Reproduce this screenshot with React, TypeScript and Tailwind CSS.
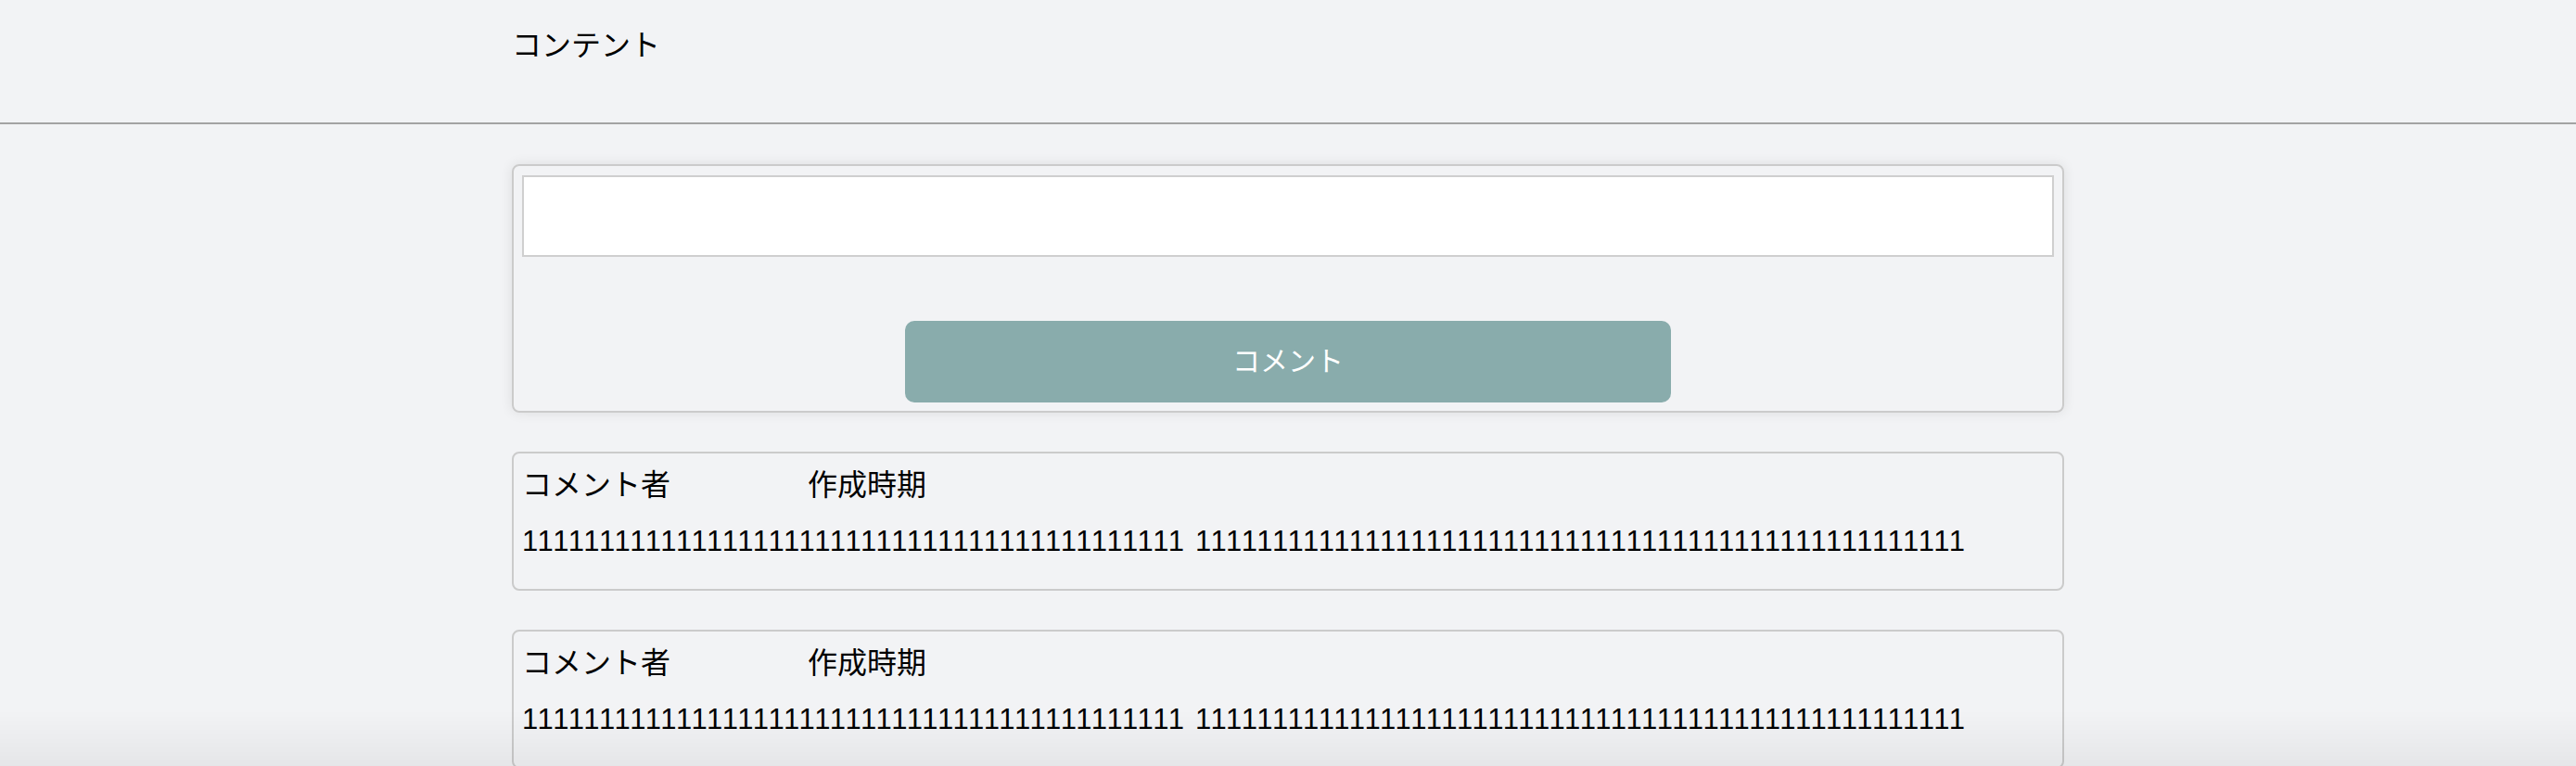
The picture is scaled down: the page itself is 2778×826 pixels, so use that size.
import React from 'react';

interface Comment {
  author: string;
  createdAt: string;
  body: string;
}

const body = '1'.repeat(43) + ' ' + '1'.repeat(50);

const comments: Comment[] = [
  { author: 'コメント者', createdAt: '作成時期', body },
  { author: 'コメント者', createdAt: '作成時期', body }
];

const CommentCard: React.FC<{ comment: Comment }> = ({ comment }) => (
  <div className="rounded-lg border-2 border-[#cbcbcb] px-[9px] pt-[9px] pb-[29px] text-black">
    <div className="flex [font-family:'Noto_Sans_CJK_JP',sans-serif] text-[32px] leading-[45px]">
      <span className="w-[308px] shrink-0">{comment.author}</span>
      <span>{comment.createdAt}</span>
    </div>
    <p className="mt-[18px] whitespace-nowrap [font-family:'Liberation_Sans',Arial,sans-serif] text-[31px] leading-[45px] tracking-[1.65px]">
      {comment.body}
    </p>
  </div>
);

export default function App() {
  return (
    <div className="min-h-screen bg-[#f2f3f5]">
      <header className="h-[134px] border-b-2 border-[#a3a3a3]">
        <div className="mx-auto w-[1674px] pt-6 [font-family:'Noto_Sans_CJK_JP',sans-serif] text-[32px] leading-[45px] text-black">
          コンテント
        </div>
      </header>

      <main className="mx-auto flex w-[1674px] flex-col gap-[42px] pt-[43px]">
        <form className="flex flex-col rounded-lg border-2 border-[#cbcbcb] px-[9px] pt-[10px] pb-[9px] shadow-[0_0_14px_rgba(0,0,0,0.09)]">
          <input type="text" className="h-[88px] w-full border-2 border-[#cfcfcf] bg-white px-3 text-[30px] outline-none" />
          <button
            type="button"
            className="mx-auto mt-[69px] h-[88px] w-1/2 rounded-[10px] bg-[#89acac] pb-[6px] [font-family:'Noto_Sans_CJK_JP',sans-serif] text-[30px] leading-[40px] text-white"
          >
            コメント
          </button>
        </form>

        {comments.map((c, i) => (
          <CommentCard key={i} comment={c} />
        ))}
      </main>

      <div className="pointer-events-none fixed inset-x-0 bottom-0 h-[60px] bg-gradient-to-b from-transparent to-black/[0.05]" />
    </div>
  );
}
